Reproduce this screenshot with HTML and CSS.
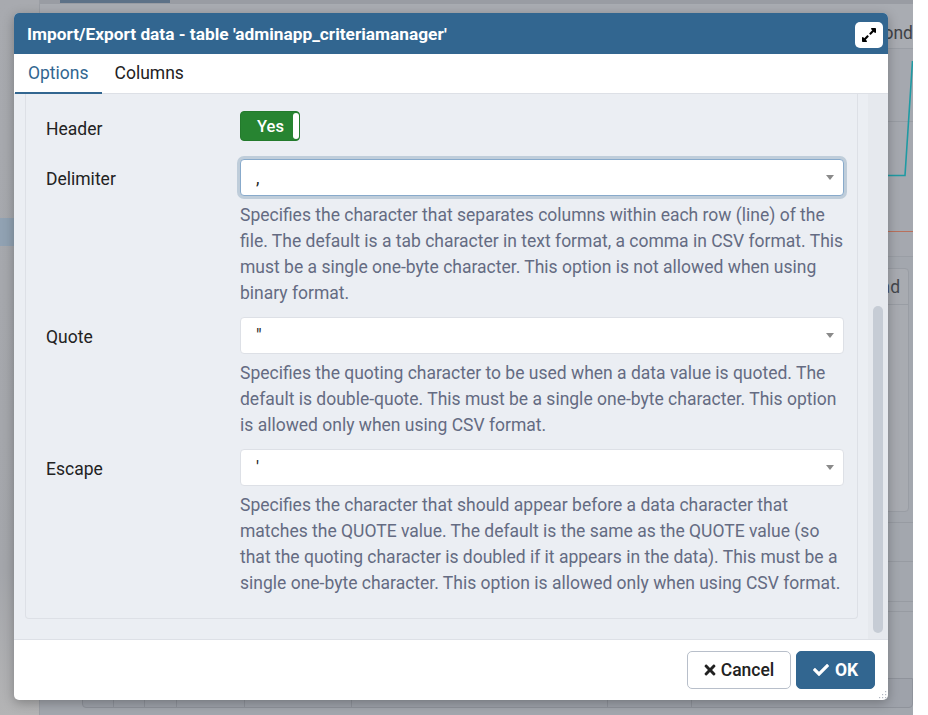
FILE: index.html
```html
<!DOCTYPE html>
<html lang="en">
<head>
<meta charset="utf-8">
<title>Import/Export data</title>
<link rel="stylesheet" href="styles.css">
</head>
<body>
<div class="app">
  <aside class="app-side"><div class="side-sel"></div></aside>
  <main class="app-main">
    <div class="m-top"><div class="m-top-tab"></div></div>
    <div class="m-head"><span>Transactions per second</span></div>
    <div class="m-chart">
      <svg class="chart-svg" width="25" height="207" viewBox="0 0 25 207">
        <line x1="0" y1="72.5" x2="25" y2="72.5" stroke="#989ca3" stroke-width="1"/>
        <polyline points="24.5,12 17,126.5 0,126.5" fill="none" stroke="#1f9aa3" stroke-width="1.6"/>
        <line x1="0" y1="182.5" x2="25" y2="182.5" stroke="#b9705c" stroke-width="1"/>
      </svg>
    </div>
    <div class="m-cards">
      <div class="m-card"><div class="m-card-head">Read</div></div>
    </div>
    <div class="m-hr m-hr1"></div>
    <div class="m-hr m-hr2"></div>
    <div class="m-hr m-hr3"></div>
    <div class="m-hr m-hr4"></div>
    <div class="m-table">
      <div class="m-cell w31"></div><div class="m-cell w31"></div><div class="m-cell w32"></div><div class="m-cell w68"></div><div class="m-cell w107"></div><div class="m-cell w256"></div><div class="m-cell w84"></div><div class="m-cell wrest"></div>
    </div>
  </main>
  <div class="app-gutter"></div>
</div>

<div class="dialog">
  <div class="dlg-title">
    <span class="dlg-title-text">Import/Export data - table 'adminapp_criteriamanager'</span>
    <button class="max-btn" type="button" aria-label="Maximize">
      <svg width="14" height="16" viewBox="0 0 448 512"><path fill="#000" d="M212.686 315.314L120 408l32.922 31.029c15.12 15.12 4.412 40.971-16.97 40.971h-112C10.697 480 0 469.255 0 456V344c0-21.382 25.803-32.090 40.922-16.971L72 360l92.686-92.686c6.248-6.248 16.379-6.248 22.627 0l25.373 25.373c6.249 6.248 6.249 16.378 0 22.627zm22.628-118.628L328 104l-32.922-31.029C279.958 57.851 290.666 32 312.048 32h112C437.303 32 448 42.745 448 56v112c0 21.382-25.803 32.090-40.922 16.971L376 152l-92.686 92.686c-6.248 6.248-16.379 6.248-22.627 0l-25.373-25.373c-6.249-6.248-6.249-16.378 0-22.627z"/></svg>
    </button>
  </div>
  <div class="tabs">
    <div class="tab active">Options</div>
    <div class="tab">Columns</div>
  </div>
  <div class="dlg-body">
    <div class="scroll-area">
      <div class="panel">
        <div class="row row-toggle">
          <div class="lbl">Header</div>
          <div class="ctl">
            <div class="toggle"><span class="toggle-text">Yes</span><i class="knob"></i></div>
          </div>
        </div>
        <div class="row">
          <div class="lbl">Delimiter</div>
          <div class="ctl">
            <div class="select focus"><span class="sel-val">,</span><i class="caret"></i></div>
            <p class="help">Specifies the character that separates columns within each row (line) of the file. The default is a tab character in text format, a comma in CSV format. This must be a single one-byte character. This option is not allowed when using binary format.</p>
          </div>
        </div>
        <div class="row">
          <div class="lbl">Quote</div>
          <div class="ctl">
            <div class="select"><span class="sel-val">"</span><i class="caret"></i></div>
            <p class="help">Specifies the quoting character to be used when a data value is quoted. The default is double-quote. This must be a single one-byte character. This option is allowed only when using CSV format.</p>
          </div>
        </div>
        <div class="row last">
          <div class="lbl">Escape</div>
          <div class="ctl">
            <div class="select"><span class="sel-val">'</span><i class="caret"></i></div>
            <p class="help">Specifies the character that should appear before a data character that matches the QUOTE value. The default is the same as the QUOTE value (so that the quoting character is doubled if it appears in the data). This must be a single one-byte character. This option is allowed only when using CSV format.</p>
          </div>
        </div>
      </div>
    </div>
    <div class="scrollbar"><div class="thumb"></div></div>
  </div>
  <div class="dlg-footer">
    <button class="btn btn-cancel" type="button">
      <svg width="12" height="16" viewBox="0 0 352 512"><path fill="#222" d="M242.72 256l100.07-100.07c12.28-12.28 12.28-32.19 0-44.48l-22.24-22.24c-12.28-12.28-32.19-12.28-44.48 0L176 189.28 75.930 89.21c-12.28-12.28-32.19-12.28-44.48 0L9.21 111.45c-12.28 12.28-12.28 32.19 0 44.48L109.28 256 9.21 356.07c-12.28 12.28-12.28 32.19 0 44.48l22.24 22.24c12.28 12.28 32.2 12.28 44.48 0L176 322.72l100.07 100.07c12.28 12.28 32.2 12.28 44.48 0l22.24-22.24c12.28-12.28 12.28-32.19 0-44.48L242.720 256z"/></svg>
      <span>Cancel</span>
    </button>
    <button class="btn btn-ok" type="button">
      <svg width="16" height="16" viewBox="0 0 512 512"><path fill="#fff" d="M173.898 439.404l-166.4-166.4c-9.997-9.997-9.997-26.206 0-36.204l36.203-36.204c9.997-9.998 26.207-9.998 36.204 0L192 312.69 432.095 72.596c9.997-9.997 26.207-9.997 36.204 0l36.203 36.204c9.997 9.997 9.997 26.206 0 36.204l-294.4 294.401c-9.998 9.997-26.207 9.997-36.204-.001z"/></svg>
      <span>OK</span>
    </button>
  </div>
  <svg class="grip" width="10" height="10" viewBox="0 0 10 10">
    <rect x="8" y="2" width="1.2" height="1.2" fill="#b3b8c2"/>
    <rect x="5" y="5" width="1.2" height="1.2" fill="#b3b8c2"/>
    <rect x="8" y="5" width="1.2" height="1.2" fill="#b3b8c2"/>
    <rect x="2" y="8" width="1.2" height="1.2" fill="#b3b8c2"/>
    <rect x="5" y="8" width="1.2" height="1.2" fill="#b3b8c2"/>
    <rect x="8" y="8" width="1.2" height="1.2" fill="#b3b8c2"/>
  </svg>
</div>
</body>
</html>
```

FILE: styles.css
```css
* { box-sizing: border-box; }
html, body { margin: 0; padding: 0; }
body {
  width: 928px;
  height: 715px;
  overflow: hidden;
  position: relative;
  background: #fff;
  font-family: Roboto, "Noto Sans", "Liberation Sans", sans-serif;
  font-size: 17.5px;
}

/* ---------- dimmed background application ---------- */
.app { display: flex; height: 715px; }
.app-side {
  width: 40px;
  flex: none;
  background: linear-gradient(to bottom, #a8aaaf 0%, #a4a6ab 80%, #b4b4b5 100%);
  border-right: 1px solid #9b9ea4;
  padding-top: 218px;
}
.side-sel { height: 28px; background: #91a2b3; }
.app-main {
  width: 873px;
  flex: none;
  background: #a3a7ae;
  display: flex;
  flex-direction: column;
  overflow: hidden;
}
.app-gutter { flex: 1; background: #fff; }

.m-top { height: 4px; background: #999ca3; display: flex; padding-left: 20px; }
.m-top-tab { width: 110px; height: 3px; background: #5d7187; }
.m-head {
  height: 45px;
  background: #a9acb2;
  border-bottom: 1px solid #9a9ea5;
  display: flex;
  align-items: center;
  justify-content: flex-end;
  padding-top: 14px;
  color: #3f4247;
  font-size: 17.5px;
  white-space: nowrap;
}
.m-chart {
  height: 208px;
  display: flex;
  justify-content: flex-end;
  border-bottom: 1px solid #9a9ea5;
  background: #a5a8af;
}
.chart-svg { display: block; }
.m-cards { padding: 11px 4px 0 0; display: flex; justify-content: flex-end; }
.m-card {
  width: 60px;
  height: 244px;
  background: #a8abb1;
  border: 1px solid #999da4;
  border-radius: 4px;
}
.m-card-head {
  height: 36px;
  border-bottom: 1px solid #999da4;
  display: flex;
  align-items: center;
  justify-content: flex-end;
  padding-right: 8px;
  color: #44474c;
  font-size: 17.5px;
}
.m-hr { border-top: 1px solid #979ba2; }
.m-hr1 { margin-top: 10px; }
.m-hr2 { margin-top: 38px; }
.m-hr3 { margin-top: 39px; }
.m-hr4 { margin-top: 9px; }
.m-table {
  margin: auto 0 7px 42px;
  height: 30px;
  display: flex;
  border: 1px solid #8f939b;
  border-radius: 0 0 4px 4px;
  background: #9ea2aa;
}
.m-cell { border-right: 1px solid #8f939b; }
.w31 { width: 31px; }
.w32 { width: 32px; }
.w68 { width: 68px; }
.w107 { width: 107px; }
.w256 { width: 256px; }
.w84 { width: 84px; }
.wrest { flex: 1; border-right: none; }

/* ---------- dialog ---------- */
.dialog {
  position: absolute;
  left: 14px;
  top: 13px;
  width: 874px;
  height: 687px;
  background: #fff;
  border-radius: 5px;
  box-shadow: 0 3px 12px rgba(0, 0, 0, 0.28);
  display: flex;
  flex-direction: column;
  overflow: hidden;
}
.dlg-title {
  height: 41px;
  flex: none;
  background: #326690;
  color: #fff;
  display: flex;
  align-items: center;
  justify-content: space-between;
  padding: 0 5px 0 13px;
}
.dlg-title-text { font-weight: 700; font-size: 17.3px; }
.max-btn {
  width: 28px;
  height: 26px;
  margin-top: 3px;
  border: none;
  border-radius: 5px;
  background: #fff;
  padding: 0;
  display: flex;
  align-items: center;
  justify-content: center;
}
.max-btn svg { display: block; }

.tabs {
  height: 40px;
  flex: none;
  display: flex;
  padding-left: 1px;
  border-bottom: 1px solid #dde0e6;
}
.tab {
  padding: 0 13px;
  display: flex;
  align-items: center;
  color: #222;
  font-size: 17.5px;
  border-bottom: 2px solid transparent;
  margin-bottom: -1px;
}
.tab.active { color: #326690; border-bottom-color: #326690; }

.dlg-body {
  flex: 1;
  display: flex;
  background: #ebeef3;
  min-height: 0;
}
.scroll-area { flex: 1; padding: 0 10px 20px 11px; }
.panel {
  border: 1px solid #dde0e6;
  border-top: none;
  border-radius: 0 0 4px 4px;
  padding: 17px 13px 22px 20px;
}
.row {
  display: grid;
  grid-template-columns: 194px 1fr;
  margin-bottom: 11px;
}
.row.row-toggle { margin-bottom: 18px; }
.row.last { margin-bottom: 0; }
.lbl {
  color: #222;
  font-size: 17.5px;
  line-height: 37px;
  padding-top: 2px;
}
.row-toggle .lbl { height: 30px; line-height: 36px; padding-top: 0; }

.toggle {
  width: 60px;
  height: 30px;
  background: #278431;
  border: 1px solid #237a2c;
  border-radius: 4px;
  display: flex;
  align-items: center;
  padding-left: 16px;
}
.toggle-text { color: #fff; font-size: 16.5px; font-weight: 500; }
.knob {
  margin-left: auto;
  width: 6px;
  height: 26px;
  background: #fff;
  border-radius: 3px;
  margin-top: -1px;
}

.select {
  height: 37px;
  background: #fff;
  border: 1px solid #dde0e6;
  border-radius: 4px;
  display: flex;
  align-items: center;
  padding: 0 9px 0 15px;
  color: #222;
  font-size: 17.5px;
}
.select.focus {
  border-color: #88aacb;
  box-shadow: 0 0 0 3px #bfcdda;
}
.sel-val { flex: 1; }
.caret {
  width: 0;
  height: 0;
  border-left: 4.5px solid transparent;
  border-right: 4.5px solid transparent;
  border-top: 5px solid #8a8a8a;
}
.help {
  margin: 6px 0 0;
  color: #646b82;
  font-size: 17.5px;
  line-height: 26px;
}

.scrollbar {
  width: 20px;
  flex: none;
  background: #e6e9ee;
  padding: 212px 5px 6px;
  display: flex;
}
.thumb { flex: 1; background: #c6ccd5; border-radius: 5px; }

.dlg-footer {
  height: 61px;
  flex: none;
  border-top: 1px solid #dde0e6;
  display: flex;
  justify-content: flex-end;
  align-items: flex-start;
  gap: 5px;
  padding: 11px 13px 0;
}
.btn {
  height: 38px;
  border-radius: 5px;
  display: flex;
  align-items: center;
  justify-content: center;
  font-family: Roboto, "Noto Sans", sans-serif;
  font-size: 17.5px;
  padding: 0;
}
.btn svg { display: block; }
.btn-cancel {
  width: 104px;
  background: #fff;
  border: 1px solid #b8bfca;
  color: #222;
  font-weight: 500;
  gap: 5px;
}
.btn-ok {
  width: 79px;
  background: #326690;
  border: 1px solid #326690;
  color: #fff;
  font-weight: 700;
  gap: 6px;
}
.grip { position: absolute; right: 1px; bottom: 1px; }
```
